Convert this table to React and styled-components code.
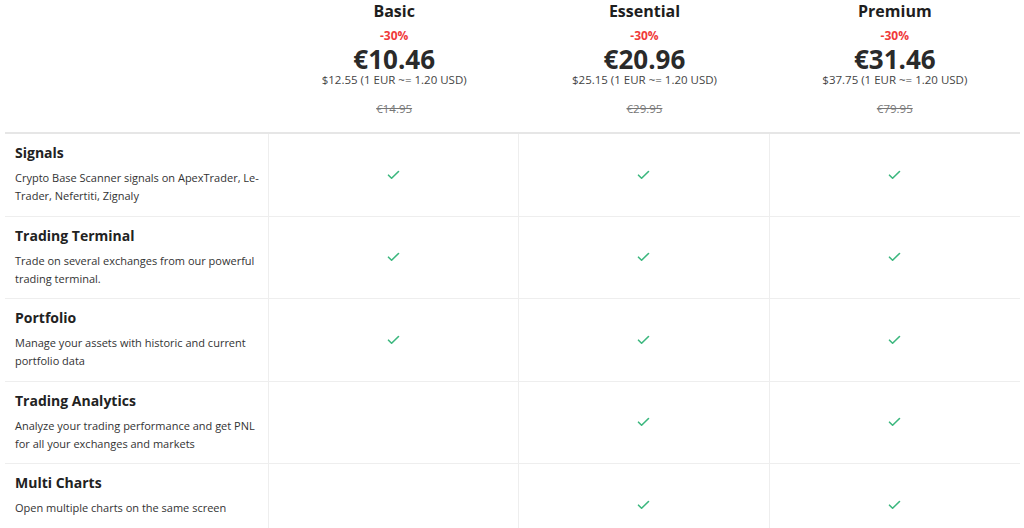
import React from 'react';
import styled, { createGlobalStyle } from 'styled-components';

const GlobalStyle = createGlobalStyle`
  body {
    margin: 0;
    background: #ffffff;
    font-family: "Open Sans", "Noto Sans", sans-serif;
    color: #222222;
  }
`;

const Table = styled.div`
  margin: 0 4px 0 5px;
  display: grid;
  grid-template-columns: 264px repeat(3, 1fr);
`;

const HeadCell = styled.div`
  display: flex;
  flex-direction: column;
  align-items: center;
  height: 132px;
  border-bottom: 2px solid #e6e6e6;
`;

const PlanName = styled.div`
  font-size: 16px;
  font-weight: 700;
  line-height: 22px;
  color: #1e1e1e;
`;

const Discount = styled.div`
  margin-top: 5px;
  font-size: 12px;
  font-weight: 700;
  line-height: 18px;
  color: #f03a3a;
`;

const Price = styled.div`
  margin-top: 1px;
  font-size: 26px;
  font-weight: 700;
  line-height: 26px;
  color: #2a2a2a;
`;

const Usd = styled.div`
  font-size: 11.5px;
  line-height: 16px;
  color: #444444;
`;

const OldPrice = styled.div`
  margin-top: 13px;
  font-size: 11.5px;
  line-height: 16px;
  color: #777777;
  text-decoration: line-through;
`;

const FeatureCell = styled.div`
  height: 82.5px;
  box-sizing: border-box;
  padding: 9px 4px 0 10px;
  border-bottom: 1px solid #eeeeee;
  border-right: 1px solid #eeeeee;
`;

const FeatureTitle = styled.div`
  font-size: 14px;
  font-weight: 700;
  line-height: 20px;
  color: #222222;
  margin-bottom: 6px;
`;

const FeatureText = styled.div`
  font-size: 11px;
  line-height: 18px;
  color: #333333;
`;

const CheckCell = styled.div`
  height: 82.5px;
  box-sizing: border-box;
  display: flex;
  align-items: center;
  justify-content: center;
  border-bottom: 1px solid #eeeeee;
  border-right: ${(p) => (p.$last ? 'none' : '1px solid #eeeeee')};
`;

const Check = () => (
  <svg width="13" height="10" viewBox="0 0 13 10" fill="none">
    <path d="M1.5 5.2 L4.6 8.2 L11.5 1.5" stroke="#3bb77e" strokeWidth="1.6" strokeLinecap="round" strokeLinejoin="round" />
  </svg>
);

const plans = [
  { name: 'Basic', price: '€10.46', usd: '$12.55 (1 EUR ~= 1.20 USD)', old: '€14.95' },
  { name: 'Essential', price: '€20.96', usd: '$25.15 (1 EUR ~= 1.20 USD)', old: '€29.95' },
  { name: 'Premium', price: '€31.46', usd: '$37.75 (1 EUR ~= 1.20 USD)', old: '€79.95' },
];

const features = [
  { title: 'Signals', text: 'Crypto Base Scanner signals on ApexTrader, Le-Trader, Nefertiti, Zignaly', has: [true, true, true] },
  { title: 'Trading Terminal', text: 'Trade on several exchanges from our powerful trading terminal.', has: [true, true, true] },
  { title: 'Portfolio', text: 'Manage your assets with historic and current portfolio data', has: [true, true, true] },
  { title: 'Trading Analytics', text: 'Analyze your trading performance and get PNL for all your exchanges and markets', has: [false, true, true] },
  { title: 'Multi Charts', text: 'Open multiple charts on the same screen', has: [false, true, true] },
];

export default function App() {
  return (
    <>
      <GlobalStyle />
      <Table>
        <HeadCell />
        {plans.map((p) => (
          <HeadCell key={p.name}>
            <PlanName>{p.name}</PlanName>
            <Discount>-30%</Discount>
            <Price>{p.price}</Price>
            <Usd>{p.usd}</Usd>
            <OldPrice>{p.old}</OldPrice>
          </HeadCell>
        ))}
        {features.map((f) => (
          <React.Fragment key={f.title}>
            <FeatureCell>
              <FeatureTitle>{f.title}</FeatureTitle>
              <FeatureText>{f.text}</FeatureText>
            </FeatureCell>
            {f.has.map((h, i) => (
              <CheckCell key={i} $last={i === 2}>{h && <Check />}</CheckCell>
            ))}
          </React.Fragment>
        ))}
      </Table>
    </>
  );
}
